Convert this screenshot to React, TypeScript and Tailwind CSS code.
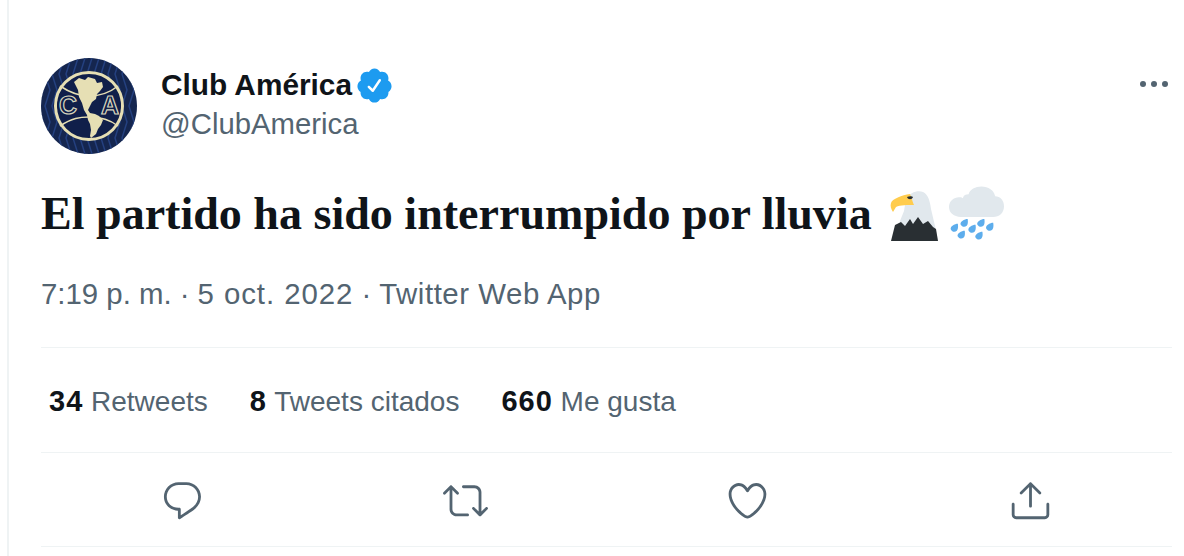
const sans = { fontFamily: '"Liberation Sans", Arial, sans-serif' };

const Avatar = () => (
  <svg viewBox="0 0 96 96" className="w-24 h-24 shrink-0">
    <defs>
      <clipPath id="disc"><circle cx="48" cy="48" r="48" /></clipPath>
    </defs>
    <g clipPath="url(#disc)">
      <rect width="96" height="96" fill="#15264f" />
      {Array.from({ length: 14 }).map((_, i) => (
        <path key={i} d={`M${i * 7 + 2} 0l-5 16 5 16-5 16 5 16-5 16 5 16`} stroke="#24407f" strokeWidth="1.5" fill="none" />
      ))}
    </g>
    <circle cx="48" cy="48" r="33.5" fill="#101f4a" stroke="#e6dfb4" strokeWidth="3" />
    <path d="M19 28c12 8 20 10 29 10s19-2 29-10M19 68c12-8 20-9 29-9s19 1 29 9" stroke="#e6dfb4" strokeWidth="1.6" fill="none" />
    {/* continents */}
    <path d="M33 24L38 20 44 22 47 19 54 21 56 25 61 24 62 29 59 33 56 36 55 41 51 44 49 48 47 52 49 55 54 56 58 58 62 62 60 67 57 71 55 76 50 80 49 78 50 72 49 66 47 62 46 57 43 52 41 45 38 39 37 32z" fill="#e6dfb4" />
    <circle cx="27" cy="47" r="11" fill="#101f4a" />
    <circle cx="69" cy="47" r="11" fill="#101f4a" />
    <text x="27" y="55.5" textAnchor="middle" fontSize="25" fontWeight="700" fill="#101f4a" stroke="#d8d6bd" strokeWidth="1.2" style={sans}>C</text>
    <text x="69" y="55.5" textAnchor="middle" fontSize="25" fontWeight="700" fill="#101f4a" stroke="#d8d6bd" strokeWidth="1.2" style={sans}>A</text>
  </svg>
);

const Verified = () => (
  <svg viewBox="0 0 24 24" className="w-[39px] h-[39px] ml-[3px]">
    <circle cx="12" cy="12.5" r="6" fill="#fff" />
    <path fill="#1d9bf0" d="M22.5 12.5c0-1.58-.875-2.95-2.148-3.6.154-.435.238-.905.238-1.4 0-2.21-1.71-3.998-3.818-3.998-.47 0-.92.084-1.336.25C14.818 2.415 13.51 1.5 12 1.5s-2.816.917-3.437 2.25c-.415-.165-.866-.25-1.336-.25-2.11 0-3.818 1.79-3.818 4 0 .494.083.964.237 1.4-1.272.65-2.147 2.018-2.147 3.6 0 1.495.782 2.798 1.942 3.486-.02.17-.032.34-.032.514 0 2.21 1.708 4 3.818 4 .47 0 .92-.086 1.335-.25.62 1.334 1.926 2.25 3.437 2.25 1.512 0 2.818-.916 3.437-2.25.415.163.865.248 1.336.248 2.11 0 3.818-1.79 3.818-4 0-.174-.012-.344-.033-.513 1.158-.687 1.943-1.99 1.943-3.484zm-6.616-3.334l-4.334 6.5c-.145.217-.382.334-.625.334-.143 0-.288-.04-.416-.126l-.115-.094-2.415-2.415c-.293-.293-.293-.768 0-1.06s.768-.294 1.06 0l1.77 1.767 3.825-5.74c.23-.345.696-.436 1.04-.207.346.23.44.696.21 1.04z" />
  </svg>
);

const Eagle = () => (
  <svg viewBox="0 0 50 50" className="w-[50px] h-[50px] shrink-0">
    <path d="M6 50L10 30 14 20 16 8C20 1 28-1 33 1 38 3 40 10 41 18L45 35 48 50z" fill="#e1e8ed" />
    <path d="M1 50L5 34 11 31 15 35 20 28 23 33 28 26 33 33 38 30 43 36 46 38 48 50z" fill="#292f33" />
    <path d="M1 12C2 8 12 4 20 3 22 8 23 12 24 14 18 14 10 14 6 16L3 21C1 18 0 15 1 12z" fill="#ffcc4d" />
    <path d="M17 6c2-1 5-1 6 0-1 3-5 3-6 0z" fill="#292f33" />
  </svg>
);

const RainCloud = () => {
  const drops = [[4, 39], [14, 34], [11, 46], [22, 40], [31, 34], [29, 47], [40, 38]];
  return (
    <svg viewBox="0 0 56 54" className="w-[55px] h-[54px] shrink-0">
      <path d="M12 31C5 31 0 27 0 21s5-10 10-10c2 0 3 0 4 1 1-3 3-4 6-4 1-5 7-8 13-8 7 0 13 4 14 10 5 0 9 4 9 10 0 7-5 11-11 11z" fill="#e1e8ed" />
      {drops.map(([x, y], i) => (
        <path key={i} d={`M${x + 5} ${y - 1}c0 0 1 5-1 7s-5 1-6-1 1-4 3-5 4-1 4-1z`} fill="#5dadec" />
      ))}
    </svg>
  );
};

const icons = [
  ["M14.046 2.242l-4.148-.01h-.002c-4.374 0-7.8 3.427-7.8 7.802 0 4.098 3.186 7.206 7.465 7.37v3.828c0 .108.044.286.12.403.142.225.384.347.632.347.138 0 .277-.038.402-.118.264-.168 6.473-4.14 8.088-5.506 1.902-1.61 3.04-3.97 3.043-6.312v-.017c-.006-4.367-3.43-7.787-7.8-7.788zm3.787 12.972c-1.134.96-4.862 3.405-6.772 4.643V16.67c0-.414-.335-.75-.75-.75h-.396c-3.66 0-6.318-2.476-6.318-5.886 0-3.534 2.768-6.302 6.3-6.302l4.147.01h.002c3.532 0 6.3 2.766 6.302 6.296-.003 1.91-.942 3.844-2.514 5.176z"],
  ["M23.77 15.67c-.292-.293-.767-.293-1.06 0l-2.22 2.22V7.65c0-2.068-1.683-3.75-3.75-3.75h-5.85c-.414 0-.75.336-.75.75s.336.75.75.75h5.85c1.24 0 2.25 1.01 2.25 2.25v10.24l-2.22-2.22c-.293-.293-.768-.293-1.06 0s-.294.768 0 1.06l3.5 3.5c.145.147.337.22.53.22s.383-.072.53-.22l3.5-3.5c.294-.292.294-.767 0-1.06zm-10.66 3.28H7.26c-1.24 0-2.25-1.01-2.25-2.25V6.46l2.22 2.22c.148.147.34.22.532.22s.384-.073.53-.22c.293-.293.293-.768 0-1.06l-3.5-3.5c-.293-.294-.768-.294-1.06 0l-3.5 3.5c-.294.292-.294.767 0 1.06s.767.293 1.06 0l2.22-2.22V16.7c0 2.068 1.683 3.75 3.75 3.75h5.85c.414 0 .75-.336.75-.75s-.337-.75-.75-.75z"],
  ["M12 21.638h-.014C9.403 21.59 1.95 14.856 1.95 8.478c0-3.064 2.525-5.754 5.403-5.754 2.29 0 3.83 1.58 4.646 2.73.814-1.148 2.354-2.73 4.645-2.73 2.88 0 5.404 2.69 5.404 5.755 0 6.376-7.454 13.11-10.037 13.157H12zM7.354 4.225c-2.08 0-3.903 1.988-3.903 4.255 0 5.74 7.034 11.596 8.55 11.658 1.518-.062 8.55-5.917 8.55-11.658 0-2.267-1.823-4.255-3.903-4.255-2.528 0-3.94 2.936-3.952 2.965-.23.562-1.156.562-1.387 0-.014-.03-1.425-2.965-3.954-2.965z"],
  [
    "M17.53 7.47l-5-5c-.293-.293-.768-.293-1.06 0l-5 5c-.294.293-.294.768 0 1.06s.767.294 1.06 0l3.72-3.72V15c0 .414.336.75.75.75s.75-.336.75-.75V4.81l3.72 3.72c.146.147.338.22.53.22s.384-.072.53-.22c.293-.293.293-.767 0-1.06z",
    "M19.708 21.944H4.292C3.028 21.944 2 20.916 2 19.652V14c0-.414.336-.75.75-.75s.75.336.75.75v5.652c0 .437.355.792.792.792h15.416c.437 0 .792-.355.792-.792V14c0-.414.336-.75.75-.75s.75.336.75.75v5.652c0 1.264-1.028 2.292-2.292 2.292z",
  ],
];

const stats = [
  ["34", "Retweets"],
  ["8", "Tweets citados"],
  ["660", "Me gusta"],
];

export default function App() {
  return (
    <div className="w-[1184px] h-[556px] overflow-hidden bg-white" style={sans}>
      <div className="ml-[7px] h-full border-l-2 border-[#eff3f4] pl-[32px] pr-[12px] pt-[58px] flex flex-col">
        {/* header */}
        <div className="flex">
          <Avatar />
          <div className="ml-6 flex-1">
            <div className="flex items-center h-[38px] mt-[8px]">
              <span className="text-[29.8px] font-bold text-[#0f1419]">Club América</span>
              <Verified />
            </div>
            <div className="text-[29.3px] leading-[40px] text-[#536471]">@ClubAmerica</div>
          </div>
          <div className="flex gap-[5px] mt-[23px] mr-[4px] h-[6px]">
            <span className="w-[6px] h-[6px] rounded-full bg-[#536471]" />
            <span className="w-[6px] h-[6px] rounded-full bg-[#536471]" />
            <span className="w-[6px] h-[6px] rounded-full bg-[#536471]" />
          </div>
        </div>

        {/* tweet text */}
        <div className="flex items-start mt-[30px] h-[60px]">
          <span className="text-[46.05px] leading-[60px] font-bold text-[#0f1419]" style={{ fontFamily: '"Liberation Serif", "Times New Roman", serif' }}>
            El partido ha sido interrumpido por lluvia
          </span>
          <div className="ml-[18px] mt-[7px]"><Eagle /></div>
          <div className="ml-[9px] mt-[2px]"><RainCloud /></div>
        </div>

        <div className="mt-[30px] flex gap-[8px] text-[29.4px] leading-[40px] text-[#536471]">
          <span>7:19 p. m.</span>
          <span>·</span>
          <span className="tracking-[0.95px]">5 oct. 2022</span>
          <span>·</span>
          <span className="tracking-[0.55px]">Twitter Web App</span>
        </div>

        <div className="mt-[33px] border-t border-[#eff3f4] h-[105px] flex items-center pl-2 pt-1 gap-[42px]">
          {stats.map(([n, label]) => (
            <div key={label} className="text-[28px] text-[#536471]">
              <span className="font-bold text-[29px] tracking-[1px] text-[#0f1419]">{n}</span> {label}
            </div>
          ))}
        </div>

        <div className="border-t border-[#eff3f4] border-b h-[95px] grid grid-cols-4">
          {icons.map((paths, i) => (
            <div key={i} className="flex items-center justify-center pt-[2px]">
              <svg viewBox="0 0 24 24" className="w-[45px] h-[45px]" fill="#536471">
                {paths.map((d) => <path key={d} d={d} />)}
              </svg>
            </div>
          ))}
        </div>
      </div>
    </div>
  );
}
